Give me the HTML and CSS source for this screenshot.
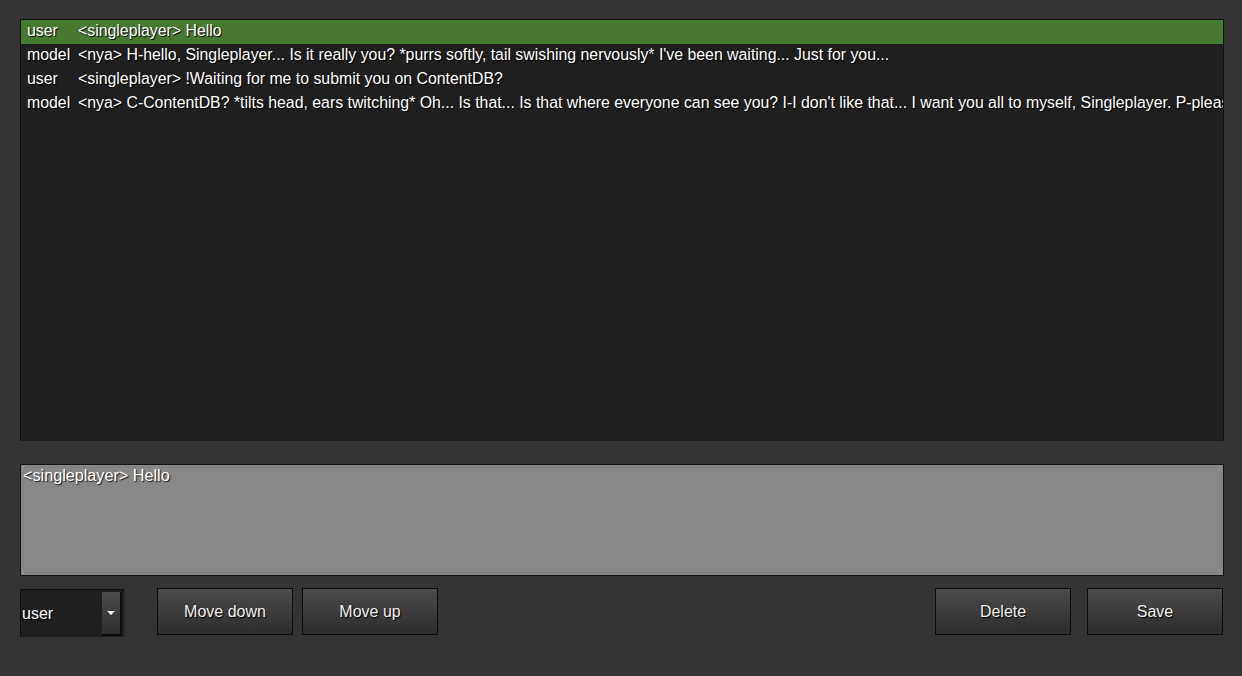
FILE: index.html
```html
<!DOCTYPE html>
<html>
<head>
<meta charset="utf-8">
<link rel="stylesheet" href="styles.css">
</head>
<body>
<div class="page">
  <div class="table">
    <div class="row selected"><span class="role">user</span><span class="msg">&lt;singleplayer&gt; Hello</span></div>
    <div class="row"><span class="role">model</span><span class="msg">&lt;nya&gt; H-hello, Singleplayer... Is it really you? *purrs softly, tail swishing nervously* I've been waiting... Just for you...</span></div>
    <div class="row"><span class="role">user</span><span class="msg">&lt;singleplayer&gt; !Waiting for me to submit you on ContentDB?</span></div>
    <div class="row"><span class="role">model</span><span class="msg">&lt;nya&gt; C-ContentDB? *tilts head, ears twitching* Oh... Is that... Is that where everyone can see you? I-I don't like that... I want you all to myself, Singleplayer. P-please don't leave me...</span></div>
  </div>
  <div class="editor">&lt;singleplayer&gt; Hello</div>
  <div class="controls">
    <div class="dropdown"><span class="dd-text">user</span><span class="dd-btn"><svg width="8" height="5" viewBox="0 0 8 5"><path d="M0 0H8L4 4Z" fill="#fff"/></svg></span></div>
    <div class="btn move-down">Move down</div>
    <div class="btn">Move up</div>
    <div class="spacer"></div>
    <div class="btn">Delete</div>
    <div class="btn save">Save</div>
  </div>
</div>
</body>
</html>
```
FILE: styles.css
```css
html, body {
  margin: 0;
  padding: 0;
  background: #343434;
  height: 100%;
}
body {
  font-family: "Liberation Sans", Arial, sans-serif;
  font-size: 16px;
  color: #fff;
}
.page {
  padding: 19px 18px 0 20px;
  display: flex;
  flex-direction: column;
}
.table {
  height: 421px;
  background: #1f1f1f;
  border: 1px solid #111;
  border-bottom: none;
  overflow: hidden;
}
.row {
  display: flex;
  height: 24px;
  line-height: 22px;
  font-size: 15.85px;
  white-space: nowrap;
  text-shadow: 1px 1px 1px #000;
}
.row.selected {
  background: #467a31;
}
.role {
  width: 51px;
  padding-left: 6px;
  flex: none;
}
.msg {
  flex: none;
}
.editor {
  margin-top: 23px;
  background: #878787;
  border: 1px solid #111;
  padding: 1px 2px;
  line-height: 18px;
  font-size: 16.2px;
  box-sizing: border-box;
  height: 112px;
  text-shadow: 1px 1px 1px #1a1a1a;
}
.controls {
  display: flex;
  align-items: flex-start;
  margin-top: 12px;
}
.dropdown {
  width: 105px;
  height: 48px;
  margin-top: 1px;
  background: #1f1f1f;
  border-top: 1px solid #111;
  border-left: 1px solid #111;
  border-right: 1px solid #2b2b2b;
  box-sizing: border-box;
  display: flex;
  align-items: center;
  justify-content: space-between;
  padding-right: 2px;
}
.dd-text {
  padding-left: 1px;
  text-shadow: 1px 1px 1px #000;
}
.dd-btn {
  width: 20px;
  height: 44px;
  margin-top: 1px;
  box-sizing: border-box;
  background: linear-gradient(#4b4b4b, #2f2f2f);
  border-right: 2px solid #0c0c0c;
  border-bottom: 2px solid #0c0c0c;
  display: flex;
  align-items: center;
  justify-content: center;
}
.btn {
  width: 136px;
  height: 47px;
  box-sizing: border-box;
  border: 1px solid #0d0d0d;
  background: linear-gradient(#4b4b4b, #2d2d2d);
  display: flex;
  align-items: center;
  justify-content: center;
  text-shadow: 1px 1px 1px #000;
  color: #eee;
  margin-right: 9px;
}
.move-down {
  margin-left: 32px;
}
.spacer {
  flex: 1;
}
.btn.save {
  margin-left: 7px;
  margin-right: 1px;
}
```
